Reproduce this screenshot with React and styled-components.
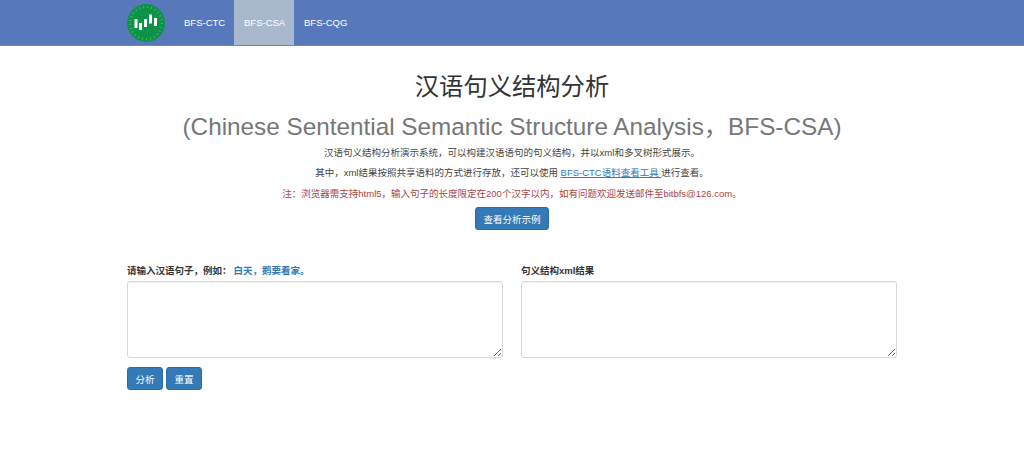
import React from "react";
import styled, { createGlobalStyle } from "styled-components";

const Global = createGlobalStyle`
  html, body { margin: 0; padding: 0; background: #fff; }
  body { font-family: "Liberation Sans", "Noto Sans CJK SC", sans-serif; font-size: 9.5px; color: #333; }
  * { box-sizing: border-box; }
`;

const Navbar = styled.nav`
  height: 46px;
  background: #5878bc;
  border-bottom: 1px solid #6b88c4;
`;
const NavInner = styled.div`
  width: 770px;
  margin: 0 auto;
  display: flex;
  height: 45px;
`;
const Brand = styled.div`
  width: 45px;
  display: flex;
  align-items: center;
`;
const NavItem = styled.a`
  display: flex;
  align-items: center;
  padding-left: ${p => (p.$first ? "12px" : "10px")};
  width: ${p => (p.$first ? "62px" : "60px")};
  font-size: 9.5px;
  color: #fff;
  background: ${p => (p.$active ? "#a9b9cd" : "transparent")};
`;
const Hero = styled.header`
  text-align: center;
`;
const Title = styled.h1`
  margin: 26px 0 0;
  font-size: 24.3px;
  line-height: 30px;
  font-weight: 400;
  color: #333;
`;
const Subtitle = styled.h2`
  margin: 10px 0 0;
  font-size: 24.3px;
  line-height: 30px;
  font-weight: 400;
  color: #777;
`;
const Para = styled.p`
  margin: ${p => p.$top || "0"} 0 0;
  height: 20px;
  line-height: 20px;
  font-size: 9.5px;
  color: ${p => (p.$danger ? "#a94442" : "#444")};
`;
const Link = styled.a`
  color: #337ab7;
  text-decoration: underline;
`;
const Button = styled.button`
  height: 23px;
  padding: 0 7.5px;
  border: 1px solid #2e6da4;
  border-radius: 3px;
  background: #337ab7;
  color: #fff;
  font: inherit;
  font-size: 9.5px;
`;
const HeroButton = styled(Button)`
  margin-top: 3px;
`;
const Columns = styled.section`
  width: 770px;
  margin: 33px auto 0;
  display: grid;
  grid-template-columns: 376px 376px;
  column-gap: 18px;
`;
const Field = styled.div`
  display: flex;
  flex-direction: column;
`;
const Label = styled.label`
  height: 18px;
  line-height: 16px;
  font-size: 9.5px;
  font-weight: 700;
  color: #333;
`;
const Example = styled.span`
  margin-left: 2px;
  color: #337ab7;
`;
const TextArea = styled.textarea`
  width: 376px;
  height: 77px;
  border: 1px solid #d8d8d8;
  border-radius: 3px;
  box-shadow: inset 0 1px 1px rgba(0,0,0,.05);
  outline: none;
  display: block;
`;
const Actions = styled.div`
  width: 770px;
  margin: 9px auto 0;
  display: flex;
  gap: 3px;
`;

const Logo = () => (
  <svg width="38" height="38" viewBox="0 0 38 38">
    <circle cx="19" cy="19" r="19" fill="#0d9348" />
    <circle cx="19" cy="19" r="16" fill="none" stroke="#4fae78" strokeWidth="2" strokeDasharray="1 3" />
    <g fill="#fff">
      <rect x="7.5" y="15" width="3" height="9" />
      <rect x="12" y="19" width="3" height="7" />
      <rect x="17" y="15" width="3" height="8" />
      <rect x="22" y="10.5" width="3" height="9" />
      <rect x="27" y="14" width="3" height="8" />
    </g>
  </svg>
);

export default function App() {
  return (
    <>
      <Global />
      <Navbar>
        <NavInner>
          <Brand><Logo /></Brand>
          <NavItem $first>BFS-CTC</NavItem>
          <NavItem $active>BFS-CSA</NavItem>
          <NavItem>BFS-CQG</NavItem>
        </NavInner>
      </Navbar>
      <Hero>
        <Title>汉语句义结构分析</Title>
        <Subtitle>(Chinese Sentential Semantic Structure Analysis，BFS-CSA)</Subtitle>
        <Para $top="1px">汉语句义结构分析演示系统，可以构建汉语语句的句义结构，并以xml和多叉树形式展示。</Para>
        <Para>其中，xml结果按照共享语料的方式进行存放，还可以使用 <Link>BFS-CTC语料查看工具 </Link>进行查看。</Para>
        <Para $top="1px" $danger>注：浏览器需支持html5，输入句子的长度限定在200个汉字以内，如有问题欢迎发送邮件至bitbfs@126.com。</Para>
        <HeroButton>查看分析示例</HeroButton>
      </Hero>
      <Columns>
        <Field>
          <Label>请输入汉语句子，例如：<Example>白天，鹅要看家。</Example></Label>
          <TextArea />
        </Field>
        <Field>
          <Label>句义结构xml结果</Label>
          <TextArea />
        </Field>
      </Columns>
      <Actions>
        <Button>分析</Button>
        <Button>重置</Button>
      </Actions>
    </>
  );
}
